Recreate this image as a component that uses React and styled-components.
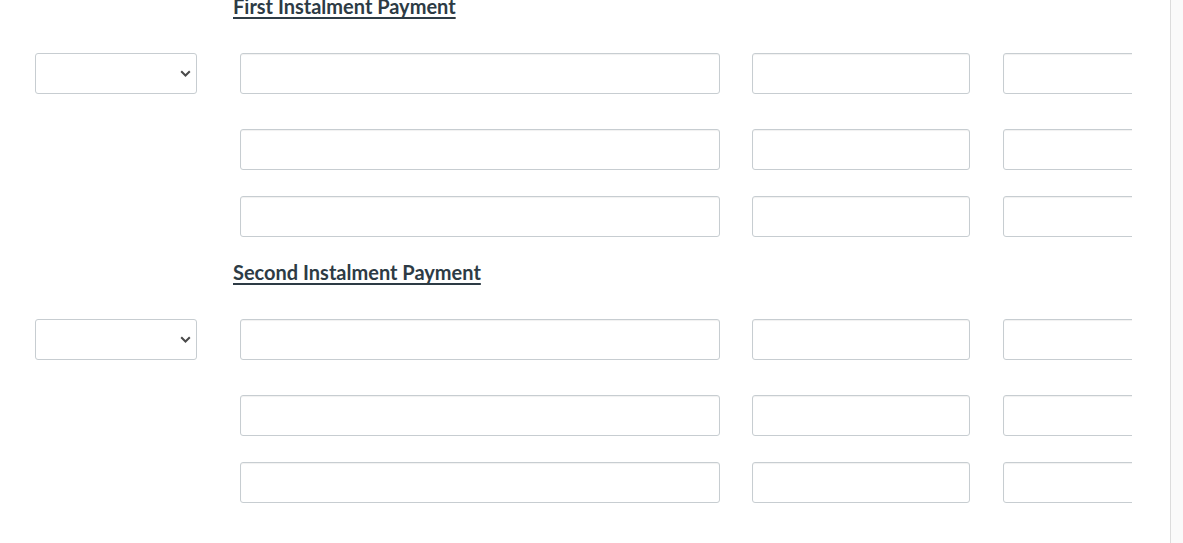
import styled, {createGlobalStyle} from 'styled-components';

const GlobalStyle = createGlobalStyle`
    html, body {
        margin: 0;
        padding: 0;
        background: #fafafa;
        font-family: Lato, "Liberation Sans", sans-serif;
        overflow: hidden;
    }
`;

const Page = styled.div`
    display: flex;
    height: 543px;
`;

const Main = styled.main`
    width: 1170px;
    flex-shrink: 0;
    background: #fff;
    border-right: 1px solid #dcdcdc;
`;

const Side = styled.aside`
    flex: 1;
    background: #fafafa;
`;

const Form = styled.div`
    width: 1097px;
    padding-left: 35px;
    margin-top: -7px;
    overflow: hidden;
`;

const Section = styled.section`
    display: flex;
    flex-direction: column;
    margin-bottom: 22px;
`;

const Heading = styled.h3`
    margin: 2px 0 36px 198px;
    font-size: 20px;
    line-height: 22px;
    font-weight: 700;
    color: #2d3b45;
    text-decoration: underline;
    text-underline-offset: 3px;
    text-decoration-thickness: 2px;
`;

const Row = styled.div`
    display: flex;
    height: 41px;
    margin-bottom: ${({$after}) => $after}px;
`;

const Cell = styled.div`
    position: relative;
    flex-shrink: 0;
    width: ${({$w}) => $w}px;
    margin-left: ${({$gap}) => $gap || 0}px;
`;

const TextInput = styled.input`
    box-sizing: border-box;
    width: 100%;
    height: 41px;
    margin: 0;
    border: 1px solid #c7cdd1;
    border-radius: 3px;
    background: #fff;
    box-shadow: inset 0 1px 1px rgba(0, 0, 0, 0.06);
    font: 14px Lato, "Liberation Sans", sans-serif;
    padding: 0 8px;
    outline: none;
`;

const Select = styled.select`
    box-sizing: border-box;
    width: 100%;
    height: 41px;
    margin: 0;
    border: 1px solid #c7cdd1;
    border-radius: 3px;
    background: #fff;
    appearance: none;
    -webkit-appearance: none;
    font: 14px Lato, "Liberation Sans", sans-serif;
    padding: 0 8px;
    outline: none;
`;

const Chevron = styled.svg`
    position: absolute;
    right: 6px;
    top: 17px;
    width: 11px;
    height: 7px;
    pointer-events: none;
`;

const rows = [
    {withSelect: true, after: 35},
    {withSelect: false, after: 26},
    {withSelect: false, after: 0},
];

const InstalmentRow = ({withSelect, after}) => (
    <Row $after={after}>
        <Cell $w={162}>
            {withSelect && (
                <>
                    <Select defaultValue="">
                        <option value=""></option>
                    </Select>
                    <Chevron viewBox="0 0 11 7">
                        <path d="M1.2 1.2l4.3 4.3 4.3-4.3" fill="none" stroke="#4a4a4a" strokeWidth="2"/>
                    </Chevron>
                </>
            )}
        </Cell>
        <Cell $w={480} $gap={43}><TextInput/></Cell>
        <Cell $w={218} $gap={32}><TextInput/></Cell>
        <Cell $w={218} $gap={33}><TextInput/></Cell>
    </Row>
);

const InstalmentSection = ({title}) => (
    <Section>
        <Heading>{title}</Heading>
        {rows.map((r, i) => (
            <InstalmentRow key={i} {...r}/>
        ))}
    </Section>
);

export default function App() {
    return (
        <>
            <GlobalStyle/>
            <Page>
                <Main>
                    <Form>
                        <InstalmentSection title="First Instalment Payment"/>
                        <InstalmentSection title="Second Instalment Payment"/>
                    </Form>
                </Main>
                <Side/>
            </Page>
        </>
    );
}
